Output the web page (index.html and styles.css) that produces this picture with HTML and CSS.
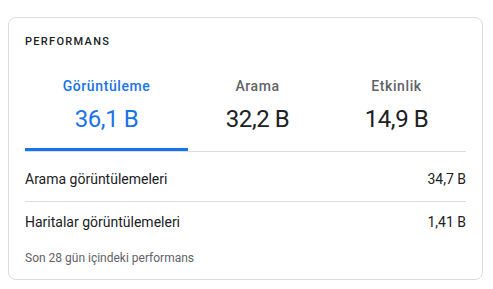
FILE: index.html
```html
<!DOCTYPE html>
<html lang="tr">

<head>
  <meta charset="UTF-8">
  <meta name="viewport" content="width=device-width, initial-scale=1.0">
  <title>Performans</title>
  <link rel="stylesheet" href="styles.css">
</head>

<body>
  <div class="card">
    <div class="card-title">PERFORMANS</div>
    <ul class="tabs">
      <li class="tab active">
        <div class="tab-label">Görüntüleme</div>
        <div class="tab-value">36,1 B</div>
      </li>
      <li class="tab">
        <div class="tab-label">Arama</div>
        <div class="tab-value">32,2 B</div>
      </li>
      <li class="tab">
        <div class="tab-label">Etkinlik</div>
        <div class="tab-value">14,9 B</div>
      </li>
    </ul>
    <ul class="rows">
      <li class="row">
        <span>Arama görüntülemeleri</span>
        <span>34,7 B</span>
      </li>
      <li class="row">
        <span>Haritalar görüntülemeleri</span>
        <span>1,41 B</span>
      </li>
    </ul>
    <div class="note">Son 28 gün içindeki performans</div>
  </div>
</body>

</html>
```

FILE: styles.css
```css
* {
  margin: 0;
  padding: 0;
  box-sizing: border-box;
}

body {
  background: #fff;
  font-family: Roboto, "Liberation Sans", Arial, sans-serif;
  color: #202124;
  padding: 17px 10px 0 8px;
}

ul {
  list-style: none;
}

.card {
  border: 1px solid #dadce0;
  border-radius: 8px;
  padding: 16px 16px 13px;
}

.card-title {
  font-size: 11px;
  line-height: 16px;
  font-weight: 500;
  letter-spacing: 1.3px;
}

.tabs {
  display: flex;
  margin-top: 10px;
  border-bottom: 1px solid #dadce0;
}

.tab {
  flex: 1 1 auto;
  text-align: center;
  padding-top: 16px;
  padding-bottom: 13px;
  border-bottom: 3px solid transparent;
  cursor: pointer;
}

.tab.active {
  border-bottom-color: #1a73e8;
  border-radius: 3px 3px 0 0;
}

.tab-label {
  font-size: 14px;
  line-height: 20px;
  font-weight: 500;
  letter-spacing: 0.6px;
  color: #5f6368;
}

.tab-value {
  margin-top: 7px;
  font-size: 24px;
  line-height: 32px;
  letter-spacing: -0.4px;
  color: #202124;
}

.tab.active .tab-label,
.tab.active .tab-value {
  color: #1a73e8;
}

.rows {
  margin-top: 7px;
}

.row {
  display: flex;
  justify-content: space-between;
  font-size: 14px;
  line-height: 20px;
  padding: 10px 0 12px;
}

.row+.row {
  border-top: 1px solid #dadce0;
}

.note {
  margin-top: 6px;
  font-size: 12px;
  line-height: 16px;
  color: #5f6368;
}
```
